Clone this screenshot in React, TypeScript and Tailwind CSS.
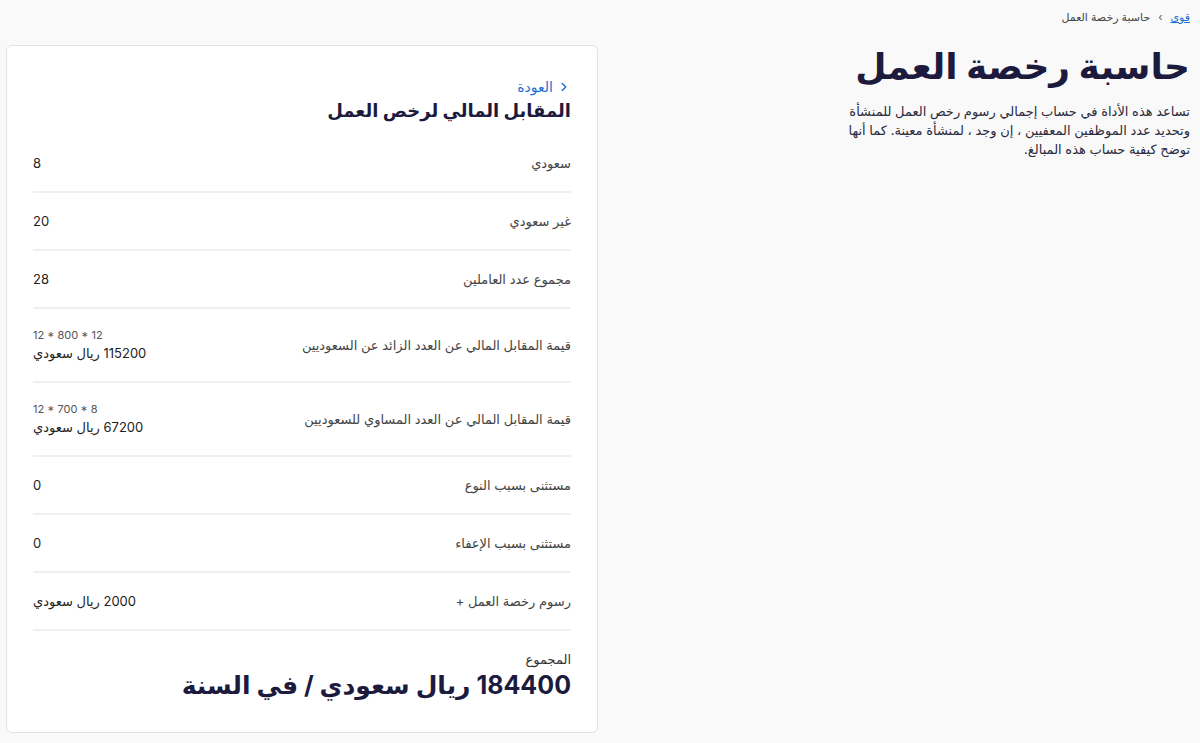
import React from 'react';

type Row = { label: string; value: string; note?: string };

const rows: Row[] = [
    { label: 'سعودي', value: '8' },
    { label: 'غير سعودي', value: '20' },
    { label: 'مجموع عدد العاملين', value: '28' },
    { label: 'قيمة المقابل المالي عن العدد الزائد عن السعوديين', note: '12 * 800 * 12', value: '115200 ريال سعودي' },
    { label: 'قيمة المقابل المالي عن العدد المساوي للسعوديين', note: '12 * 700 * 8', value: '67200 ريال سعودي' },
    { label: 'مستثنى بسبب النوع', value: '0' },
    { label: 'مستثنى بسبب الإعفاء', value: '0' },
    { label: 'رسوم رخصة العمل +', value: '2000 ريال سعودي' },
];

const App: React.FC = () => {
    return (
        <div
            dir="rtl"
            className="min-h-screen w-full bg-[#f9f9f9] text-[#1e1e3c]"
            style={{ fontFamily: 'Inter, "DejaVu Sans", sans-serif' }}
        >
            {/* breadcrumb */}
            <div className="flex items-center gap-2 px-[10px] pt-[9px] text-[11px] leading-[16px]">
                <a href="#" className="text-[#1b6fd6] underline">قوى</a>
                <span className="text-[#555]">›</span>
                <span className="text-[#444]">حاسبة رخصة العمل</span>
            </div>

            <div className="flex justify-between items-start pr-[10px] pl-[6px] pt-[20px] pb-[10px]">
                {/* intro column */}
                <div className="w-[390px] -mt-[3px]">
                    <h1 className="whitespace-nowrap text-[36px] leading-[48px] font-bold text-[#1c1b3d]">حاسبة رخصة العمل</h1>
                    <p className="mt-[12px] whitespace-nowrap text-[13px] leading-[19px] text-[#2b2b40]">
                        تساعد هذه الأداة في حساب إجمالي رسوم رخص العمل للمنشأة
                        <br />
                        وتحديد عدد الموظفين المعفيين ، إن وجد ، لمنشأة معينة. كما أنها
                        <br />
                        توضح كيفية حساب هذه المبالغ.
                    </p>
                </div>

                {/* result card */}
                <div className="w-[592px] rounded-[6px] border border-[#e3e3e3] bg-white px-[26px] pt-[31px] pb-[30px]">
                    <a href="#" className="flex items-center gap-1 text-[14px] leading-[20px] text-[#1b6fd6]">
                        <svg width="14" height="14" viewBox="0 0 24 24" fill="none" stroke="currentColor" strokeWidth="2.5" strokeLinecap="round" strokeLinejoin="round">
                            <path d="M9 6l6 6-6 6" />
                        </svg>
                        <span>العودة</span>
                    </a>
                    <h2 className="text-[18px] leading-[28px] font-bold text-[#1c1b3d]">المقابل المالي لرخص العمل</h2>

                    <div className="mt-[10px]">
                        {rows.map((r) => (
                            <div key={r.label} className="flex items-center justify-between border-b-2 border-[#f0f0f0] py-[18px] text-[13px] leading-[20px]">
                                <span className="text-[#444]">{r.label}</span>
                                <div className="flex flex-col items-end">
                                    {r.note && (
                                        <span dir="ltr" className="text-[11px] leading-[16px] text-[#555]">{r.note}</span>
                                    )}
                                    <span className="text-[#222]">{r.value}</span>
                                </div>
                            </div>
                        ))}
                    </div>

                    <div className="pt-[19px]">
                        <div className="text-[13px] leading-[18px] text-[#333]">المجموع</div>
                        <div className="text-[25px] leading-[34px] font-bold text-[#1c1b3d]">184400 ريال سعودي / في السنة</div>
                    </div>
                </div>
            </div>
        </div>
    );
};

export default App;
